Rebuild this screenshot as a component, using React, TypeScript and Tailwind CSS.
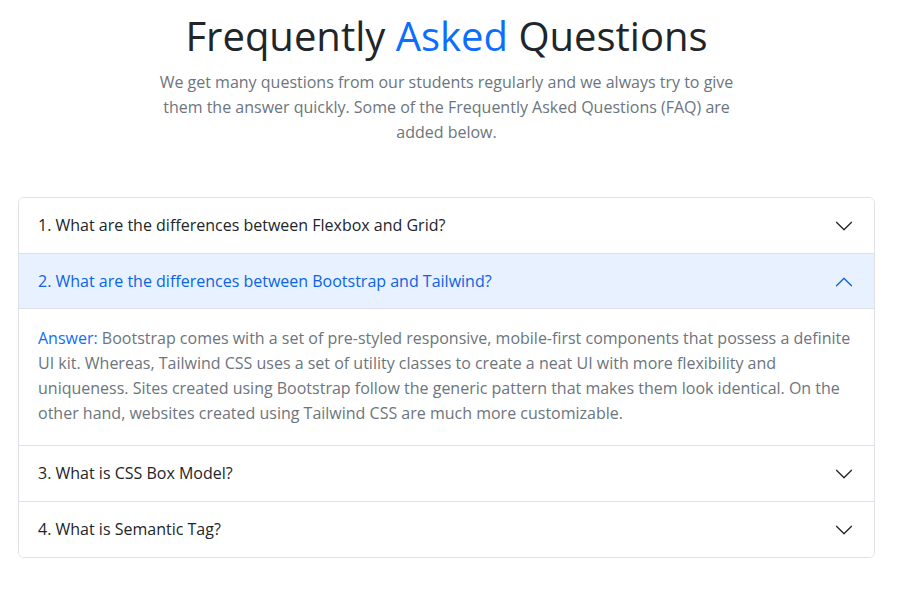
import React, { useState } from 'react';

interface FaqItem {
  id: number;
  question: string;
  answer: string;
}

const faqs: FaqItem[] = [
  {
    id: 1,
    question: '1. What are the differences between Flexbox and Grid?',
    answer: 'Flexbox is a one-dimensional layout model, while Grid is a two-dimensional layout model that works on rows and columns at the same time.',
  },
  {
    id: 2,
    question: '2. What are the differences between Bootstrap and Tailwind?',
    answer: 'Bootstrap comes with a set of pre-styled responsive, mobile-first components that possess a definite UI kit. Whereas, Tailwind CSS uses a set of utility classes to create a neat UI with more flexibility and uniqueness. Sites created using Bootstrap follow the generic pattern that makes them look identical. On the other hand, websites created using Tailwind CSS are much more customizable.',
  },
  {
    id: 3,
    question: '3. What is CSS Box Model?',
    answer: 'Every element is a rectangular box made of content, padding, border and margin.',
  },
  {
    id: 4,
    question: '4. What is Semantic Tag?',
    answer: 'A semantic tag clearly describes its meaning to both the browser and the developer.',
  },
];

const Chevron: React.FC<{ open: boolean }> = ({ open }) => (
  <svg
    viewBox="0 0 16 16"
    fill="currentColor"
    className={`w-5 h-5 shrink-0 ${open ? 'rotate-180 text-[#0c63e4]' : 'text-[#212529]'}`}
  >
    <path
      fillRule="evenodd"
      d="M1.646 4.646a.5.5 0 0 1 .708 0L8 10.293l5.646-5.647a.5.5 0 0 1 .708.708l-6 6a.5.5 0 0 1-.708 0l-6-6a.5.5 0 0 1 0-.708z"
    />
  </svg>
);

export default function App() {
  const [openId, setOpenId] = useState<number | null>(2);

  return (
    <div className="min-h-screen bg-white font-['Open_Sans',sans-serif]">
      <div className="w-[893px]">
        <div className="text-center pt-[12px]">
          <h1 className="text-[40px] leading-[48px] text-[#212529]">
            Frequently <span className="text-[#0d6efd]">Asked</span> Questions
          </h1>
          <p className="mx-auto mt-[10px] max-w-[600px] text-base leading-[25px] text-[#6c757d]">
            We get many questions from our students regularly and we always try to give them the answer quickly. Some of the Frequently Asked Questions (FAQ) are added below.
          </p>
        </div>

        <div className="ml-[18px] mt-[52px] w-[857px] border border-[#dee2e6] rounded-md overflow-hidden">
          {faqs.map((item, i) => {
            const isOpen = openId === item.id;
            return (
              <div key={item.id} className={i > 0 ? 'border-t border-[#dee2e6]' : ''}>
                <button
                  onClick={() => setOpenId(isOpen ? null : item.id)}
                  className={`flex items-center justify-between w-full pl-[19px] pr-5 py-4 text-left text-base leading-[23px] ${
                    isOpen ? 'bg-[#e7f1ff] text-[#0c63e4] shadow-[inset_0_-1px_0_#dee2e6]' : 'bg-white text-[#212529]'
                  }`}
                >
                  {item.question}
                  <Chevron open={isOpen} />
                </button>
                {isOpen && (
                  <div className="pl-[19px] pr-5 pt-[17px] pb-[19px] text-base leading-[25px] text-[#6c757d]">
                    <span className="text-[#0d6efd]">Answer:</span> {item.answer}
                  </div>
                )}
              </div>
            );
          })}
        </div>
      </div>
    </div>
  );
}
